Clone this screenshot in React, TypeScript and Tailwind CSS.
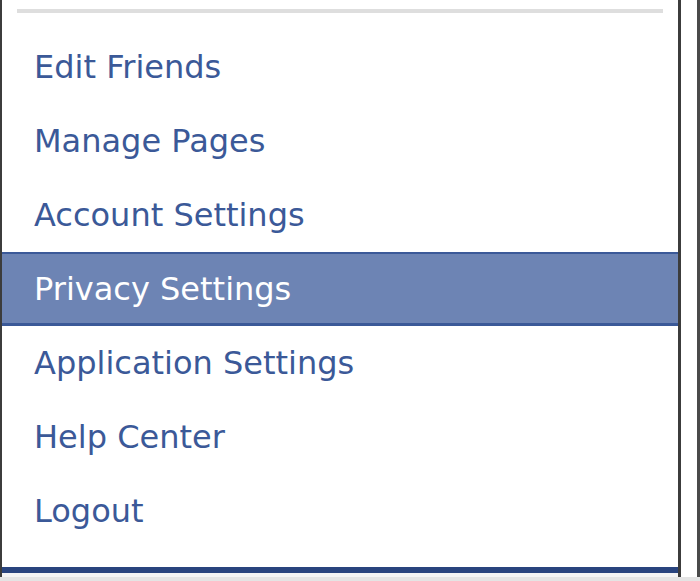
import React from 'react';

const items = [
	'Edit Friends',
	'Manage Pages',
	'Account Settings',
	'Privacy Settings',
	'Application Settings',
	'Help Center',
	'Logout',
];

export default function App(): JSX.Element {
	return (
		<div className="flex flex-col w-[700px] h-[581px] bg-white font-['DejaVu_Sans',sans-serif]">
			<div className="flex h-[577px]">
				<div className="flex flex-col w-[681px] h-full border-l-2 border-r-[3px] border-[#3c3c3c]">
					<div className="flex flex-col flex-1 bg-white pt-[9px]">
						<div className="mx-[15px] h-[4px] bg-[#dedede]" />
						<ul className="flex flex-col mt-[17px]">
							{items.map((item) => {
								const active = item === 'Privacy Settings';
								return (
									<li
										key={item}
										className={
											active
												? 'flex items-center h-[74px] pl-[32px] text-[32px] text-white bg-[#6d84b4] border-t-2 border-b-[3px] border-[#3b5998]'
												: 'flex items-center h-[74px] pl-[32px] text-[32px] text-[#3b5998]'
										}
									>
										{item}
									</li>
								);
							})}
						</ul>
					</div>
					<div className="h-[6px] bg-[#29447e]" />
					<div className="h-[4px] bg-[#f4f4f4]" />
				</div>
				<div className="flex-1 flex justify-end">
					<div className="w-[3px] h-full bg-[#4a4a4a]" />
				</div>
			</div>
			<div className="flex-1 bg-[#e4e4e4]" />
		</div>
	);
}
